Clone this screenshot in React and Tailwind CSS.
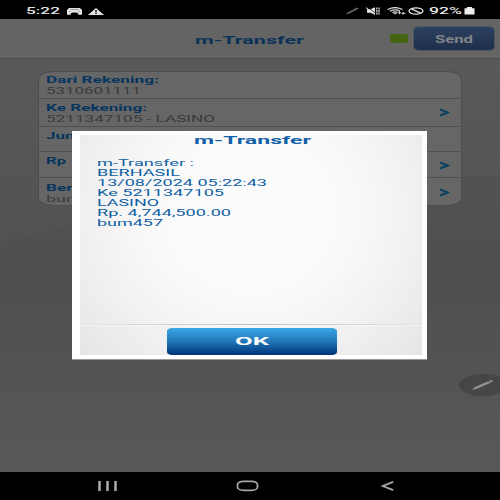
import { useLayoutEffect, useRef } from "react";

// Text stretched horizontally so that it fills the given width.
function Wide({ w, className = "", children }) {
  const ref = useRef(null);
  useLayoutEffect(() => {
    const el = ref.current;
    el.style.transform = `scaleX(${w / el.getBoundingClientRect().width})`;
  }, [w]);
  return (
    <span className={`flex shrink-0 ${className}`} style={{ width: w }}>
      <span ref={ref} className="block shrink-0 origin-left whitespace-pre">
        {children}
      </span>
    </span>
  );
}

function Chevron() {
  return (
    <svg className="mr-[11px] h-[9px] w-[11px] shrink-0" viewBox="0 0 11 9" fill="none">
      <path d="M1 1.4 8.8 4.5 1 7.6" stroke="#0c425f" strokeWidth="2.1" />
    </svg>
  );
}

function Row({ className, label, labelWidth, value, valueWidth, arrow }) {
  return (
    <div className={`flex justify-between border-[#505050] pl-[7px] ${className}`}>
      <div className="flex flex-col self-start">
        <Wide w={labelWidth} className="text-[9.6px] leading-[11px] font-bold text-[#07355e]">{label}</Wide>
        {value && (
          <Wide w={valueWidth} className="text-[9.3px] leading-[11px] text-[#3a3a3d]">{value}</Wide>
        )}
      </div>
      {arrow && (
        <div className="mt-[6px]">
          <Chevron />
        </div>
      )}
    </div>
  );
}

function StatusBar() {
  return (
    <div className="flex h-[19px] items-center bg-black pt-[3px] pl-[26px] text-[#e4e4e4]">
      <Wide w={34} className="text-[8.8px] leading-[12px] font-medium">5:22</Wide>
      <svg className="ml-[7px] h-[7px] w-[15px]" viewBox="0 0 15 7">
        <path d="M2 0h11l1.3 1.6H15V6.8h-3.8V5.3L9 4.5H6l-2.2.8v1.5H0V1.6h.7z" fill="#e4e4e4" />
        <path d="M3.3 1.3h8.4v.5H3.3zM2 3.2h2v.5H2zM11 3.2h2v.5h-2z" fill="#555" />
      </svg>
      <svg className="ml-[6px] h-[7px] w-[16px]" viewBox="0 0 16 7">
        <path d="M8 0 16 7H0z" fill="#e4e4e4" />
        <path d="M7.3 2.1h1.4v2.4H7.3zM7.3 5.1h1.4v.9H7.3z" fill="#111" />
      </svg>
      <svg className="ml-[241px] h-[8px] w-[15px]" viewBox="0 0 15 8">
        <path d="m.5 7.4 2-2L11.8.6l2.2.9L4.6 6.4z" fill="#606060" />
      </svg>
      <svg className="ml-[6px] h-[8px] w-[15px]" viewBox="0 0 15 8">
        <path d="M1 2.2h3.3L9 .3v7.4L4.3 5.8H1z" fill="#e4e4e4" />
        <path d="m1.6.3 8 5.8" stroke="#000" strokeWidth=".7" />
        <path d="m0 .6 9 6.6" stroke="#e4e4e4" strokeWidth="1" />
        <path d="M10.8.5v7M13 .5v7" stroke="#d0d0d0" strokeWidth="1.3" strokeDasharray="1.9 .6" />
      </svg>
      <svg className="ml-[6px] h-[8px] w-[19px]" viewBox="0 0 19 8" fill="none" stroke="#d6d6d6">
        <path d="M.5 2.5Q8-1.4 15.5 2.5M3 4.1Q8 1.5 13 4.1M5.4 5.5Q8 4.2 10.6 5.5" strokeWidth="1.2" />
        <path d="m6.4 6 1.7 1.2L9.8 6z" fill="#d6d6d6" strokeWidth=".4" />
        <path d="M12.5 4.2v3M11 5.8h3M16 5v2.7M14.5 6.3h4" strokeWidth="1" />
      </svg>
      <svg className="ml-[2px] h-[8px] w-[16px]" viewBox="0 0 16 8" fill="none" stroke="#e4e4e4" strokeWidth="1.3">
        <ellipse cx="8" cy="4" rx="7" ry="3.2" />
        <path d="m3.3 1.9 9.4 4.2" />
      </svg>
      <Wide w={33} className="ml-[5px] text-[8.8px] leading-[12px] font-medium">92%</Wide>
      <svg className="ml-[2px] h-[8px] w-[11px]" viewBox="0 0 11 8">
        <path d="M3 0h5v1.2h2.5V7.6H.5V1.2H3z" fill="#ededed" />
      </svg>
    </div>
  );
}

function NavBar() {
  return (
    <div className="flex h-[28px] items-center bg-black">
      <svg className="ml-[98px] h-[10px] w-[20px]" viewBox="0 0 20 10" stroke="#a5a5a5" strokeWidth="2.6">
        <path d="M1.5 0v10M9.5 0v10M17.5 0v10" />
      </svg>
      <svg className="ml-[118px] h-[12px] w-[23px]" viewBox="0 0 23 12" fill="none" stroke="#a5a5a5" strokeWidth="1.8">
        <rect x="1.5" y="1.4" width="20" height="8.9" rx="6" ry="3.4" />
      </svg>
      <svg className="ml-[122px] h-[10px] w-[14px]" viewBox="0 0 14 10" fill="none" stroke="#a5a5a5" strokeWidth="1.8">
        <path d="M12.2.8 2 5l10.2 4.2" />
      </svg>
    </div>
  );
}

function Dialog() {
  return (
    <div className="absolute top-[131px] left-[72px] h-[229px] w-[355px] border-b border-[#999] bg-white pt-[4px] pr-[5px] pl-[8px]">
      <div className="flex h-[220px] flex-col bg-[radial-gradient(ellipse_62%_90%_at_50%_35%,#fcfcfc_0%,#fafafa_45%,#f1f1f1_75%,#e3e3e3_115%)]">
        <div className="flex h-[22px] pl-[114px]">
          <Wide w={117} className="-mt-[2px] text-[11.6px] leading-[14px] font-bold text-[#1260a8]">m-Transfer</Wide>
        </div>
        <div className="flex h-[167px] flex-col pt-px pl-[17px] text-[9px] leading-[10px] text-[#0f5fa3]">
          <Wide w={97}>m-Transfer :</Wide>
          <Wide w={83}>BERHASIL</Wide>
          <Wide w={170}>13/08/2024 05:22:43</Wide>
          <Wide w={127}>Ke 5211347105</Wide>
          <Wide w={62}>LASINO</Wide>
          <Wide w={134}>Rp. 4,744,500.00</Wide>
          <Wide w={66}>bum457</Wide>
        </div>
        <div className="h-px bg-linear-to-r from-[#e4e4e4] via-[#bcbfc6] to-[#e4e4e4]" />
        <div className="h-px bg-[#f6f6f6]" />
        <div className="mt-[2px] ml-[87px] flex h-[27px] w-[170px] items-center justify-center rounded-[5px/3px] bg-linear-to-b from-[#3da8e6] via-[#2176b9] to-[#033478]">
          <Wide w={34} className="text-[11.6px] leading-[13px] font-bold text-white">OK</Wide>
        </div>
      </div>
    </div>
  );
}

export default function App() {
  return (
    <div className="relative flex h-[500px] w-[500px] flex-col overflow-hidden bg-[#545454] font-['Roboto','Liberation_Sans',sans-serif]">
      <StatusBar />
      <header className="flex h-[40px] items-center border-b border-[#4e4e4e] bg-[#646464] pl-[195px]">
        <Wide w={109} className="pt-[2px] text-[11.6px] leading-[14px] font-bold text-[#0a3259]">m-Transfer</Wide>
        <div className="ml-[86px] h-[9px] w-[18px] rounded-[2px] bg-[#456512]" />
        <div className="ml-[6px] flex h-[23px] w-[80px] items-center justify-center rounded-[5px/3px] bg-linear-to-b from-[#2d4160] to-[#1e2f4c] ring-1 ring-[#505762]">
          <Wide w={38} className="pt-[2px] text-[10.4px] leading-[13px] font-bold text-[#818489]">Send</Wide>
        </div>
      </header>
      <main className="relative h-[413px] bg-linear-to-b from-[#595959] from-0% via-[#525252] via-45% to-[#585858] to-100%">
        <svg className="absolute inset-0 h-[413px] w-[500px]" viewBox="0 0 500 413">
          <defs>
            <linearGradient id="hill" x1="0" y1="0" x2="0" y2="1">
              <stop offset="0" stopColor="#525252" />
              <stop offset="0.35" stopColor="#4f4f4f" />
              <stop offset="1" stopColor="#585858" />
            </linearGradient>
          </defs>
          <path d="M0 184Q55 171 100 157Q300 122 500 117V413H0z" fill="url(#hill)" />
        </svg>
        <div className="relative ml-[38px] w-[424px] pt-[12px]">
          <div className="h-[135px] overflow-hidden rounded-[16px/8px] border border-[#4c4c4c] bg-[#666666]">
            <Row className="h-[27px] border-b pt-[2px]" label="Dari Rekening:" labelWidth={113} value="5310601111" valueWidth={95} />
            <Row className="h-[28px] border-b pt-[3px]" label="Ke Rekening:" labelWidth={101} value="5211347105 - LASINO" valueWidth={169} arrow />
            <Row className="h-[25px] border-b pt-[3px]" label="Jumlah Uang:" labelWidth={105} />
            <Row className="h-[26px] border-b pt-[3px]" label="Rp" labelWidth={20} arrow />
            <Row className="h-[28px] pt-[4px]" label="Berita:" labelWidth={51} value="bum457" valueWidth={66} arrow />
          </div>
        </div>
      </main>
      <NavBar />
      <Dialog />
      <div className="absolute top-[374px] left-[459px] h-[22px] w-[48px] rounded-[50%] bg-[#464646]">
        <svg className="ml-[12px] mt-[5px] h-[12px] w-[24px]" viewBox="0 0 24 12">
          <path d="m1 11 2.4-2.8L17.2 2.2l3 1.3L6.6 9.6zM18 1.8l1.7-.8 2.6 1.1-1.4 1.1z" fill="#929292" />
        </svg>
      </div>
    </div>
  );
}
